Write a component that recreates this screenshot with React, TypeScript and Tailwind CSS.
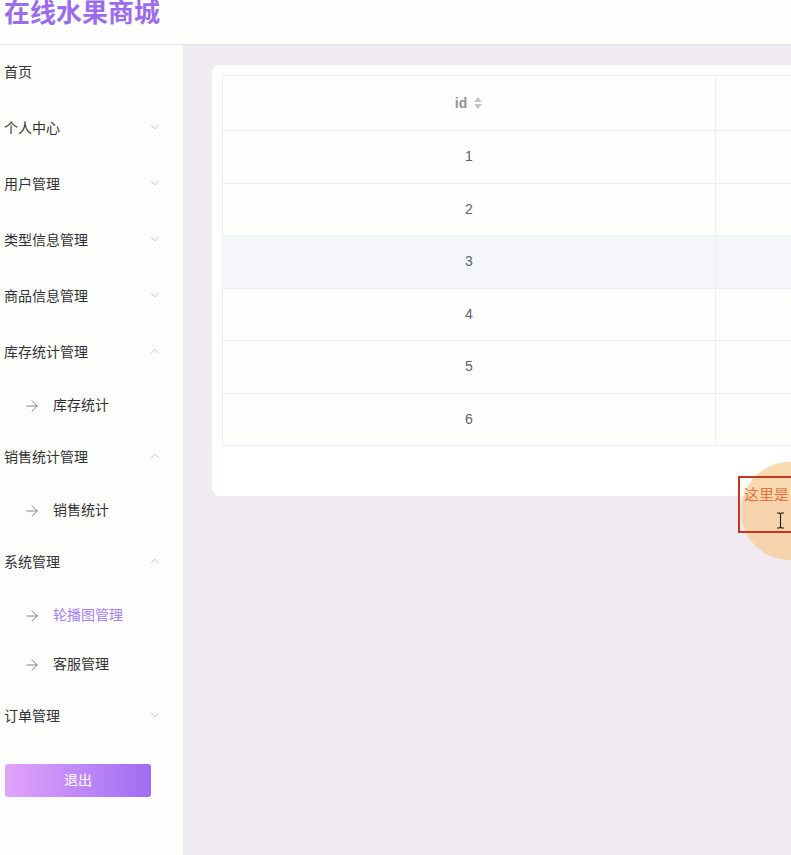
import { ChevronDown, ChevronUp, ArrowRight } from 'lucide-react'

interface MenuEntry {
  label: string
  arrow?: 'down' | 'up'
  children?: { label: string; active?: boolean }[]
}

const menu: MenuEntry[] = [
  { label: '首页' },
  { label: '个人中心', arrow: 'down' },
  { label: '用户管理', arrow: 'down' },
  { label: '类型信息管理', arrow: 'down' },
  { label: '商品信息管理', arrow: 'down' },
  { label: '库存统计管理', arrow: 'up', children: [{ label: '库存统计' }] },
  { label: '销售统计管理', arrow: 'up', children: [{ label: '销售统计' }] },
  {
    label: '系统管理',
    arrow: 'up',
    children: [{ label: '轮播图管理', active: true }, { label: '客服管理' }]
  },
  { label: '订单管理', arrow: 'down' }
]

const rows = [1, 2, 3, 4, 5, 6]

export default function App() {
  return (
    <div
      className="relative w-[791px] h-[855px] overflow-hidden flex flex-col bg-white"
      style={{ fontFamily: '"Liberation Sans", "Noto Sans CJK SC", sans-serif' }}
    >
      {/* 顶部 */}
      <header className="h-[45px] shrink-0 border-b border-[#e6e6e6] bg-[#fefefd]">
        <h1 className="pl-[4px] pt-[1px] text-[26px] leading-[24px] font-bold text-[#9b6cec]">
          在线水果商城
        </h1>
      </header>

      <div className="flex flex-1 min-h-0">
        {/* 侧边栏 */}
        <aside className="w-[183px] shrink-0 bg-[#fdfdfc] text-[14px] text-[#303133]">
          {menu.map((m) => (
            <div key={m.label}>
              <div className="h-14 flex items-center justify-between pl-[4px] pr-[21px] pb-[1px]">
                <span>{m.label}</span>
                {m.arrow === 'down' && (
                  <ChevronDown size={14} strokeWidth={1.2} className="text-[#a8abb2] -mt-[3px]" />
                )}
                {m.arrow === 'up' && (
                  <ChevronUp size={14} strokeWidth={1.2} className="text-[#a8abb2] -mt-[3px]" />
                )}
              </div>
              {m.children?.map((c) => (
                <div key={c.label} className="h-[49px] flex items-center pl-[23px]">
                  <ArrowRight size={18} strokeWidth={1.1} className="text-[#6b6d72]" />
                  <span
                    className={
                      'ml-[12px] text-[14px] ' + (c.active ? 'text-[#a77ef2]' : 'text-[#303133]')
                    }
                  >
                    {c.label}
                  </span>
                </div>
              ))}
            </div>
          ))}

          <button className="mt-[19px] ml-[5px] w-[146px] h-[33px] rounded-[3px] bg-gradient-to-r from-[#e2a3fa] to-[#a06cf3] text-white text-[14px]">
            退出
          </button>
        </aside>

        {/* 内容 */}
        <main className="flex-1 min-w-0 bg-[#f0ebf1] pl-[29px] pt-[20px] overflow-hidden">
          <div className="w-[900px] bg-white rounded-lg p-[10px] pb-[50px]">
            <table className="w-[880px] border-collapse text-[14px] text-[#606266] bg-[#fefefd]">
              <thead>
                <tr className="h-[55px]">
                  <th className="w-[493px] border border-[#ebeef5] font-bold text-[#909399]">
                    <span className="inline-flex items-center gap-[6px] -mt-[2px]">
                      id
                      <svg width="10" height="14" viewBox="0 0 10 14">
                        <path d="M5 1 L9 6 L1 6 Z" fill="#c0c4cc" />
                        <path d="M5 13 L9 8 L1 8 Z" fill="#c0c4cc" />
                      </svg>
                    </span>
                  </th>
                  <th className="border border-[#ebeef5]"></th>
                </tr>
              </thead>
              <tbody>
                {rows.map((r) => (
                  <tr key={r} className={'h-[52.5px] ' + (r === 3 ? 'bg-[#f5f6fa]' : '')}>
                    <td className="border border-[#ebeef5] text-center">{r}</td>
                    <td className="border border-[#ebeef5]"></td>
                  </tr>
                ))}
              </tbody>
            </table>
          </div>
        </main>
      </div>

      {/* 鼠标提示 */}
      <div className="absolute left-[741px] top-[462px] w-[98px] h-[98px] rounded-full bg-[#f7c98f]/70" />
      <div className="absolute left-[738px] top-[476px] w-[80px] h-[57px] border-2 border-[#c8361e]">
        <span className="block pl-[4px] pt-[7px] text-[15px] leading-[20px] text-[#e8743c]">
          这里是
        </span>
      </div>
      <svg className="absolute left-[776px] top-[512px]" width="9" height="17" viewBox="0 0 9 17">
        <path
          d="M1 1 H3.5 L4.5 2 L5.5 1 H8 M4.5 2 V15 M1 16 H3.5 L4.5 15 L5.5 16 H8"
          fill="none"
          stroke="#1a1a1a"
          strokeWidth="1.1"
        />
      </svg>
    </div>
  )
}
